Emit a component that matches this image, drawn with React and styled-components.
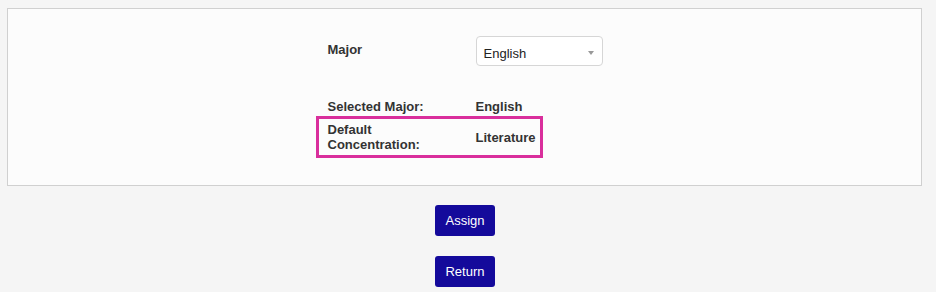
import React from "react";
import styled, { createGlobalStyle } from "styled-components";

const GlobalStyle = createGlobalStyle`
  html, body {
    margin: 0;
    background: #f5f5f5;
  }
  body {
    padding: 8px 14px 0 7px;
    font-family: "Liberation Sans", Arial, sans-serif;
    font-size: 13px;
    color: #333;
  }
`;

const Panel = styled.div`
  background: #fcfcfc;
  border: 1px solid #d0d0d0;
  height: 178px;
  box-sizing: border-box;
  padding-top: 27px;
  display: flex;
  justify-content: center;
`;

const Form = styled.div`
  width: 276px;
  margin-left: 2px;
  display: flex;
  flex-direction: column;
`;

const Row = styled.div`
  display: grid;
  grid-template-columns: 148px auto;
  align-items: ${(p) => (p.$top ? "start" : "center")};
  line-height: 15px;
  font-weight: bold;
  margin-top: ${(p) => p.$mt || 0}px;
`;

const Label = styled.div`
  padding-top: ${(p) => p.$pt || 0}px;
`;

const Highlight = styled(Row)`
  width: fit-content;
  margin-left: -12px;
  border: 3px solid #d92f9c;
  padding: 3px 5px 3px 9px;
`;

const Select = styled.div`
  width: 127px;
  height: 30px;
  box-sizing: border-box;
  border: 1px solid #d6d6d6;
  border-radius: 4px;
  background: #fff;
  display: flex;
  align-items: center;
  justify-content: space-between;
  padding: 5px 8px 0 7px;
  font-weight: normal;
  color: #222;
`;

const Arrow = styled.span`
  width: 0;
  height: 0;
  border-left: 3px solid transparent;
  border-right: 3px solid transparent;
  border-top: 4px solid #999;
  margin-top: -2px;
`;

const Actions = styled.div`
  display: flex;
  flex-direction: column;
  align-items: center;
  gap: 20px;
  padding-top: 19px;
  margin-left: 1px;
`;

const Button = styled.button`
  width: 60px;
  height: 31px;
  border: none;
  border-radius: 3px;
  background: #140a9b;
  color: #fff;
  font-family: "Liberation Sans", Arial, sans-serif;
  font-size: 13px;
  padding: 0;
  cursor: pointer;
`;

export default function App() {
  return (
    <>
      <GlobalStyle />
      <Panel>
        <Form>
          <Row $top>
            <Label $pt={6}>Major</Label>
            <Select>
              English
              <Arrow />
            </Select>
          </Row>
          <Row $mt={33}>
            <Label>Selected Major:</Label>
            <div>English</div>
          </Row>
          <Highlight $mt={2}>
            <Label>
              Default
              <br />
              Concentration:
            </Label>
            <div>Literature</div>
          </Highlight>
        </Form>
      </Panel>
      <Actions>
        <Button>Assign</Button>
        <Button>Return</Button>
      </Actions>
    </>
  );
}
